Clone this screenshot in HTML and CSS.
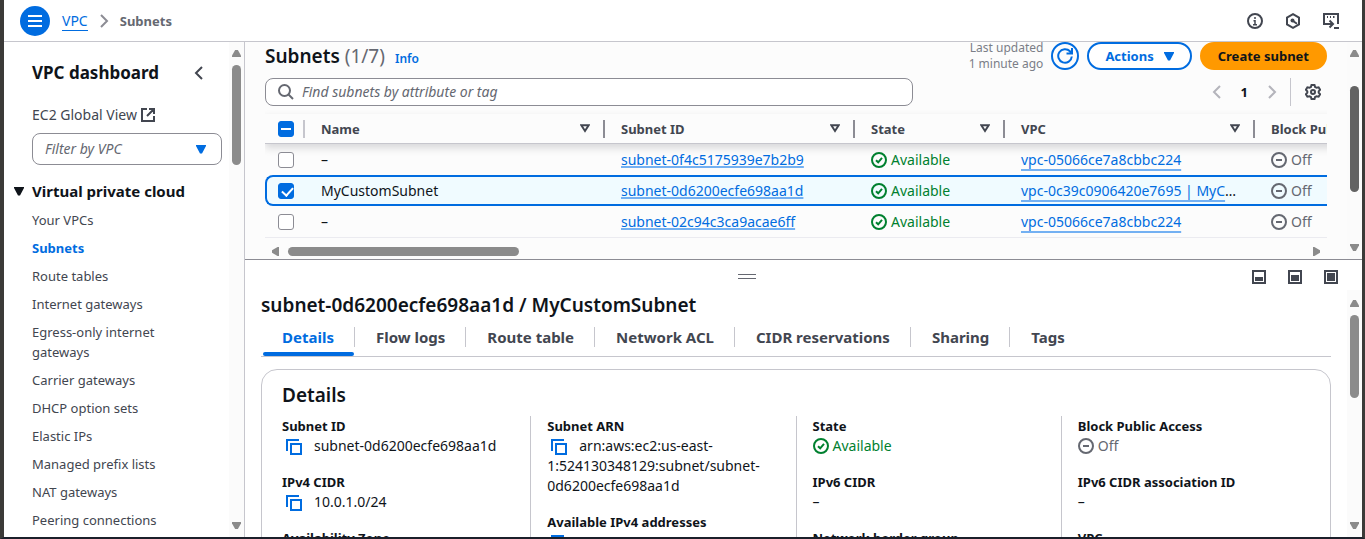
FILE: index.html
```html
<!DOCTYPE html>
<html lang="en">
<head>
<meta charset="utf-8">
<meta name="viewport" content="width=device-width, initial-scale=1">
<title>Subnets | VPC Console</title>
<link rel="stylesheet" href="styles.css">
</head>
<body>
<svg class="sprite" aria-hidden="true">
  <symbol id="ok" viewBox="0 0 16 16"><circle cx="8" cy="8" r="7"/><path d="M5 8.2 7.2 10.3 11 5.8"/></symbol>
  <symbol id="off" viewBox="0 0 16 16"><circle cx="8" cy="8" r="7"/><path d="M5 8h6"/></symbol>
  <symbol id="copy" viewBox="0 0 16 16"><path d="M1 12V1h12"/><path d="M5 5h10v10H5z"/></symbol>
  <symbol id="sort" viewBox="0 0 10 9"><path d="M1.3 1.2h7.4L5 7z"/></symbol>
  <symbol id="caret" viewBox="0 0 10 9"><path d="M0 0h10v1L6 8.500H4L0 1z"/></symbol>
  <symbol id="left" viewBox="0 0 10 14"><path d="M8 1 2 7l6 6"/></symbol>
  <symbol id="right" viewBox="0 0 10 14"><path d="m2 1 6 6-6 6"/></symbol>
</svg>
<div class="app">
  <header class="topbar">
    <button class="menu" aria-label="Open navigation"><svg viewBox="0 0 14 12"><path d="M0 1h14M0 6h14M0 11h14"/></svg></button>
    <nav class="crumbs" aria-label="Breadcrumb">
      <a href="#vpc">VPC</a>
      <svg class="chev"><use href="#right"/></svg>
      <span>Subnets</span>
    </nav>
    <div class="tools">
      <button aria-label="Info"><svg viewBox="0 0 16 16"><circle cx="8" cy="8" r="7"/><path stroke-width="1.500" d="M8 4v2M8 7v5M6.500 7.700H8M6 11.700h4"/></svg></button>
      <button aria-label="Diagnose"><svg viewBox="0 0 16 16"><path d="M8 1.200 14 4.500v7L8 14.800 2 11.500v-7z"/><circle class="solid" cx="7.500" cy="7.500" r="2"/><path d="m8 8 4 2.800"/></svg></button>
      <button aria-label="CloudShell"><svg viewBox="0 0 16 16"><path d="M4 11H1V1h14v10M4 4h1M7 4h1M10 4h1.500M4 11h5M6.500 7.500 10 11l-3.500 3.500M11 15h5"/></svg></button>
    </div>
  </header>

  <div class="body">
    <aside class="side">
      <div class="side-main">
        <div class="side-head">
          <h2>VPC dashboard</h2>
          <button aria-label="Close navigation"><svg class="chev"><use href="#left"/></svg></button>
        </div>
        <a class="ext" href="#ec2">EC2 Global View <svg viewBox="0 0 14 14"><path d="M6 1H1v12h12V8M8 1h5v5M13 1 6 8"/></svg></a>
        <button class="filter"><span>Filter by VPC</span><svg class="caret"><use href="#caret"/></svg></button>
        <h3><svg class="caret"><use href="#caret"/></svg>Virtual private cloud</h3>
        <ul>
          <li><a href="#v">Your VPCs</a></li>
          <li><a class="on" href="#s">Subnets</a></li>
          <li><a href="#r">Route tables</a></li>
          <li><a href="#i">Internet gateways</a></li>
          <li><a href="#e">Egress-only internet gateways</a></li>
          <li><a href="#c">Carrier gateways</a></li>
          <li><a href="#d">DHCP option sets</a></li>
          <li><a href="#el">Elastic IPs</a></li>
          <li><a href="#m">Managed prefix lists</a></li>
          <li><a href="#n">NAT gateways</a></li>
          <li><a href="#p">Peering connections</a></li>
        </ul>
      </div>
      <div class="vbar"><i class="up"></i><b class="thumb"></b><i class="down"></i></div>
    </aside>

    <main>
      <section class="list">
        <div class="list-main">
          <div class="list-head">
            <div class="heading">
              <h1>Subnets <span>(1/7)</span></h1>
              <a class="info" href="#info">Info</a>
            </div>
            <p class="updated">Last updated<br>1 minute ago</p>
            <button class="round" aria-label="Refresh"><svg viewBox="0 0 16 16"><path d="M14.800 8.500A6.800 6.800 0 1 1 13 3.300L14.500 5M15 0v5.500H9.500"/></svg></button>
            <button class="btn">Actions <svg class="caret"><use href="#caret"/></svg></button>
            <button class="btn primary">Create subnet</button>
          </div>
          <div class="list-tools">
            <label class="search">
              <svg viewBox="0 0 16 16"><circle cx="6.500" cy="6.500" r="5.500"/><path d="m10.500 10.500 4.500 4.500"/></svg>
              <input type="text" aria-label="Find subnets" placeholder="Find subnets by attribute or tag">
            </label>
            <div class="pager">
              <button aria-label="Previous page"><svg class="chev"><use href="#left"/></svg></button>
              <b>1</b>
              <button aria-label="Next page"><svg class="chev"><use href="#right"/></svg></button>
              <button class="gear" aria-label="Preferences"><svg viewBox="0 0 16 16"><path d="M6.500 1h3l.6 2 1.500.8 2-.5 1.500 2.500L13.700 7.300v1.400l1.400 1.500-1.500 2.500-2-.5-1.500.8-.6 2h-3l-.6-2-1.500-.8-2 .5L.9 10.200l1.400-1.500V7.300L.9 5.800l1.500-2.500 2 .5L5.900 3z"/><circle cx="8" cy="8" r="2"/></svg></button>
            </div>
          </div>
          <div class="table-wrap">
            <table>
              <colgroup><col class="c-check"><col class="c-name"><col class="c-id"><col class="c-state"><col class="c-id"><col class="c-id"></colgroup>
              <thead>
                <tr>
                  <th><input type="checkbox" class="some" aria-label="Select all"></th>
                  <th><div>Name <svg class="sort"><use href="#sort"/></svg></div></th>
                  <th><div>Subnet ID <svg class="sort"><use href="#sort"/></svg></div></th>
                  <th><div>State <svg class="sort"><use href="#sort"/></svg></div></th>
                  <th><div>VPC <svg class="sort"><use href="#sort"/></svg></div></th>
                  <th><div>Block Public Access</div></th>
                </tr>
              </thead>
              <tbody>
                <tr>
                  <td><input type="checkbox" aria-label="Select subnet-0f4c5175939e7b2b9"></td>
                  <td>–</td>
                  <td><a href="#a">subnet-0f4c5175939e7b2b9</a></td>
                  <td><span class="status ok"><svg><use href="#ok"/></svg>Available</span></td>
                  <td class="vpc"><a href="#b">vpc-05066ce7a8cbbc224</a></td>
                  <td><span class="status"><svg><use href="#off"/></svg>Off</span></td>
                </tr>
                <tr class="sel">
                  <td><input type="checkbox" checked aria-label="Select MyCustomSubnet"></td>
                  <td>MyCustomSubnet</td>
                  <td><a href="#a">subnet-0d6200ecfe698aa1d</a></td>
                  <td><span class="status ok"><svg><use href="#ok"/></svg>Available</span></td>
                  <td class="vpc"><a href="#b">vpc-0c39c0906420e7695 | MyC</a>…</td>
                  <td><span class="status"><svg><use href="#off"/></svg>Off</span></td>
                </tr>
                <tr>
                  <td><input type="checkbox" aria-label="Select subnet-02c94c3ca9acae6ff"></td>
                  <td>–</td>
                  <td><a href="#a">subnet-02c94c3ca9acae6ff</a></td>
                  <td><span class="status ok"><svg><use href="#ok"/></svg>Available</span></td>
                  <td class="vpc"><a href="#b">vpc-05066ce7a8cbbc224</a></td>
                  <td><span class="status"><svg><use href="#off"/></svg>Off</span></td>
                </tr>
              </tbody>
            </table>
          </div>
          <div class="hbar"><i class="prev"></i><b class="thumb"></b><i class="next"></i></div>
        </div>
        <div class="vbar dark"><i class="up"></i><b class="thumb"></b><i class="down"></i></div>
      </section>

      <section class="split">
        <div class="split-bar">
          <button class="grip" aria-label="Resize panel"></button>
          <div class="sizes">
            <button aria-label="Small panel"><svg viewBox="0 0 14 14"><path d="M1 1h12v12H1z"/><path class="solid" d="M3 7h8v4H3z"/></svg></button>
            <button aria-label="Medium panel"><svg viewBox="0 0 14 14"><path d="M1 1h12v12H1z"/><path class="solid" d="M3 5h8v6H3z"/></svg></button>
            <button aria-label="Full panel"><svg viewBox="0 0 14 14"><path d="M1 1h12v12H1z"/><path class="solid" d="M3 3h8v8H3z"/></svg></button>
          </div>
        </div>
        <div class="split-body">
          <div class="split-main">
            <h2>subnet-0d6200ecfe698aa1d / MyCustomSubnet</h2>
            <div class="tabs" role="tablist">
              <button role="tab" aria-selected="true">Details</button>
              <button role="tab">Flow logs</button>
              <button role="tab">Route table</button>
              <button role="tab">Network ACL</button>
              <button role="tab">CIDR reservations</button>
              <button role="tab">Sharing</button>
              <button role="tab">Tags</button>
            </div>
            <div class="card">
              <h3>Details</h3>
              <div class="cols">
                <dl>
                  <dt>Subnet ID</dt><dd><button class="copy" aria-label="Copy"><svg><use href="#copy"/></svg></button>subnet-0d6200ecfe698aa1d</dd>
                  <dt>IPv4 CIDR</dt><dd><button class="copy" aria-label="Copy"><svg><use href="#copy"/></svg></button>10.0.1.0/24</dd>
                  <dt>Availability Zone</dt>
                </dl>
                <dl>
                  <dt>Subnet ARN</dt><dd><button class="copy" aria-label="Copy"><svg><use href="#copy"/></svg></button>arn:aws:ec2:us-east-<br>1:524130348129:subnet/subnet-<br>0d6200ecfe698aa1d</dd>
                  <dt>Available IPv4 addresses</dt><dd><button class="copy" aria-label="Copy"><svg><use href="#copy"/></svg></button></dd>
                </dl>
                <dl>
                  <dt>State</dt><dd><span class="status ok"><svg><use href="#ok"/></svg>Available</span></dd>
                  <dt>IPv6 CIDR</dt><dd>–</dd>
                  <dt>Network border group</dt>
                </dl>
                <dl>
                  <dt>Block Public Access</dt><dd><span class="status"><svg><use href="#off"/></svg>Off</span></dd>
                  <dt>IPv6 CIDR association ID</dt><dd>–</dd>
                  <dt>VPC</dt>
                </dl>
              </div>
            </div>
          </div>
          <div class="vbar"><i class="up"></i><b class="thumb"></b><i class="down"></i></div>
        </div>
      </section>
    </main>
  </div>
</div>
</body>
</html>
```

FILE: styles.css
```css
:root {
  --ink: #0f141a;
  --text: #424650;
  --muted: #656871;
  --blue: #006ce0;
  --line: #c6c6cd;
  --edge: #8c8c94;
  --green: #00802f;
}
* { box-sizing: border-box; }
body {
  margin: 0;
  font: 14px/20px "Noto Sans", "Open Sans", sans-serif;
  color: var(--ink);
}
h1, h2, h3, p, ul, dl, dd { margin: 0; padding: 0; }
ul { list-style: none; }
button { font: inherit; color: inherit; background: none; border: 0; padding: 0; }
a { color: var(--blue); text-decoration: none; }
svg { display: block; flex: none; width: 16px; height: 16px; fill: none; stroke: currentColor; stroke-width: 2; }
.sprite { display: none; }
.solid { fill: currentColor; stroke: none; }
.chev { width: 10px; height: 14px; }
.caret { width: 10px; height: 9px; fill: currentColor; stroke: none; }
.sort { width: 10px; height: 9px; }

.app {
  display: flex;
  flex-direction: column;
  height: 100vh;
  overflow: hidden;
  border: solid #3b3a38;
  border-width: 0 3px 2px 4px;
  border-bottom-color: #1b1f2a;
}
.body { flex: 1; min-height: 0; display: flex; }

/* Top bar */
.topbar {
  flex: none;
  display: flex;
  align-items: center;
  height: 42px;
  padding: 0 23px 0 16px;
  border-bottom: 1px solid var(--line);
}
.menu {
  display: grid;
  place-items: center;
  width: 30px;
  height: 30px;
  border-radius: 50%;
  background: var(--blue);
  color: #fff;
}
.menu svg { width: 14px; height: 12px; }
.crumbs { display: flex; align-items: center; gap: 11px; margin-left: 12px; }
.crumbs a { border-bottom: 1px solid var(--blue); line-height: 19px; }
.crumbs .chev { color: var(--edge); }
.crumbs span { color: var(--muted); font-weight: 700; font-size: 13px; }
.tools { display: flex; gap: 22px; margin-left: auto; color: var(--text); }

/* Side navigation */
.side { flex: none; display: flex; width: 241px; border-right: 1px solid var(--line); }
.side-main { flex: 1; padding: 20px 8px 0 28px; overflow: hidden; color: var(--text); }
.side-head { display: flex; align-items: center; justify-content: space-between; padding-right: 17px; }
.side-head h2 { font-size: 17px; line-height: 22px; font-weight: 700; color: var(--ink); }
.ext { display: flex; align-items: center; gap: 4px; margin-top: 21px; color: var(--text); }
.ext svg { width: 14px; height: 14px; }
.filter {
  display: flex;
  align-items: center;
  justify-content: space-between;
  width: 190px;
  height: 32px;
  margin-top: 8px;
  padding: 0 15px 0 12px;
  border: 1px solid var(--edge);
  border-radius: 8px;
  font-style: italic;
  color: var(--muted);
}
.filter .caret { color: var(--blue); }
.side h3 { display: flex; align-items: center; gap: 8px; margin: 16px 0 9px -18px; font-size: 15px; font-weight: 700; color: var(--ink); }
.side li { margin-bottom: 8px; font-size: 13px; padding-right: 40px; }
.side li a { color: var(--text); }
.side li a.on { color: var(--blue); font-weight: 700; }

/* Scroll bars */
.vbar { flex: none; display: flex; flex-direction: column; align-items: center; width: 15px; padding: 8px 0; background: #fbfbfb; }
.vbar i, .hbar i { width: 9px; height: 7px; background: #8b8b8b; }
.vbar .up { clip-path: polygon(35% 0, 65% 0, 100% 80%, 100% 100%, 0 100%, 0 80%); }
.vbar .down { margin-top: auto; clip-path: polygon(0 0, 100% 0, 100% 20%, 65% 100%, 35% 100%, 0 20%); }
.thumb { background: #8b8b8b; border-radius: 5px; }
.vbar .thumb { width: 9px; height: 100px; margin-top: 8px; }
.vbar.dark .thumb { height: 106px; margin-top: 29px; background: #636363; }
.split .vbar { padding: 10px 0 8px; }
.split .vbar .thumb { height: 83px; }
.hbar { display: flex; align-items: center; height: 9px; margin-top: 9px; padding: 0 7px; }
.hbar i { width: 7px; height: 9px; }
.hbar .prev { clip-path: polygon(100% 0, 100% 100%, 80% 100%, 0 65%, 0 35%, 80% 0); }
.hbar .next { margin-left: auto; clip-path: polygon(0 0, 0 100%, 20% 100%, 100% 65%, 100% 35%, 20% 0); }
.hbar .thumb { width: 22%; height: 9px; margin-left: 9px; }

/* Subnet list */
main { flex: 1; min-width: 0; display: flex; flex-direction: column; }
.list { flex: none; display: flex; background: #fcfcfc; border-bottom: 1px solid var(--edge); }
.list-main { flex: 1; min-width: 0; padding: 0 20px 3px; }
.list-head { display: flex; align-items: center; height: 28px; }
.heading { display: flex; align-items: baseline; gap: 10px; }
h1 { font-size: 19px; line-height: 28px; font-weight: 600; }
h1 span { font-weight: 400; color: var(--muted); }
.info { font-size: 12px; font-weight: 600; }
.updated { margin: 0 8px 0 auto; color: #7b7e87; font-size: 12px; line-height: 16px; text-align: right; }
.round { display: grid; place-items: center; width: 28px; height: 28px; border: 2px solid var(--blue); border-radius: 50%; color: var(--blue); }
.btn {
  display: flex;
  align-items: center;
  gap: 10px;
  height: 28px;
  margin-left: 8px;
  padding: 0 16px;
  border: 2px solid var(--blue);
  border-radius: 14px;
  background: #fff;
  color: var(--blue);
  font-size: 13px;
  font-weight: 700;
}
.btn.primary { background: #f90; border-color: #f90; color: var(--ink); }
.list-tools { display: flex; align-items: center; justify-content: space-between; margin-top: 8px; }
.search {
  display: flex;
  align-items: center;
  gap: 8px;
  width: 61%;
  height: 28px;
  padding: 0 12px;
  border: 1px solid var(--edge);
  border-radius: 8px;
  background: #fff;
  color: var(--muted);
}
.search input { flex: 1; border: 0; padding: 0; outline: 0; background: none; font: italic 14px/20px "Noto Sans", sans-serif; }
.search input::placeholder { color: var(--muted); }
.pager { display: flex; align-items: center; gap: 19px; padding-right: 6px; color: #b4b4bb; }
.pager b { font-size: 13px; font-weight: 700; color: var(--ink); }
.gear { margin-left: -6px; padding: 6px 0 6px 14px; border-left: 1px solid var(--line); color: var(--text); }
.table-wrap { margin: 0 -20px; padding: 8px 20px 0; overflow: hidden; clip-path: inset(0 20px); }
table { width: 1240px; table-layout: fixed; border-collapse: separate; border-spacing: 0; }
.c-check { width: 40px; }
.c-name { width: 300px; }
.c-id { width: 250px; }
.c-state { width: 150px; }
thead { box-shadow: 0 4px 8px rgba(0, 7, 22, .15); }
th { height: 30px; padding: 0; text-align: left; font-size: 13px; font-weight: 700; color: var(--text); border-bottom: 1px solid var(--line); }
th div { display: flex; align-items: center; justify-content: space-between; height: 18px; padding: 0 13px 0 16px; border-right: 2px solid var(--edge); }
th:last-child div { border: 0; }
th:first-child { background: linear-gradient(var(--line), var(--line)) right center / 2px 18px no-repeat; }
td { height: 31px; padding: 0 16px; white-space: nowrap; line-height: 20px; border: 0 solid #ebebf0; }
tbody tr:last-child td { height: 32px; border-bottom-width: 1px; }
th:first-child, td:first-child { padding: 0 0 0 13px; }
.sel td { background: #f0fbff; border: solid var(--blue); border-width: 2px 0; }
.sel td:first-child { border-left-width: 2px; border-radius: 8px 0 0 8px; padding-left: 11px; }
td a { text-decoration: underline #73b0f2; text-decoration-thickness: 2px; text-underline-offset: 1px; text-decoration-skip-ink: none; }
td.vpc a { text-underline-offset: 4px; }
.status { display: flex; align-items: center; gap: 4px; color: var(--muted); }
.status.ok { color: var(--green); }
input[type="checkbox"] {
  appearance: none;
  display: block;
  width: 16px;
  height: 16px;
  margin: 0;
  border: 1px solid var(--edge);
  border-radius: 3px;
  background: #fff;
}
input[type="checkbox"]:checked, input[type="checkbox"].some { position: relative; border-color: var(--blue); background: var(--blue); }
input[type="checkbox"]:checked::after {
  content: "";
  position: absolute;
  left: 5px;
  top: 1px;
  width: 5px;
  height: 9px;
  border: solid #fff;
  border-width: 0 2px 2px 0;
  transform: rotate(42deg);
}
input.some::after { content: ""; position: absolute; left: 2px; right: 2px; top: 6px; height: 2px; background: #fff; }

/* Split panel */
.split { flex: 1; min-height: 0; display: flex; flex-direction: column; }
.split-bar { flex: none; display: flex; align-items: center; height: 30px; padding: 3px 24px 0 0; }
.grip { width: 18px; height: 5px; margin: 0 auto; border: solid var(--muted); border-width: 1px 0; }
.sizes { display: flex; gap: 22px; margin-left: 4px; color: var(--text); }
.sizes svg { width: 14px; height: 14px; }
.split-body { flex: 1; min-height: 0; display: flex; }
.split-main { flex: 1; min-width: 0; padding: 3px 16px 0; overflow: hidden; }
.split-main > h2 { font-size: 19px; line-height: 24px; font-weight: 600; }
.tabs { display: flex; align-items: flex-start; height: 40px; padding-top: 10px; border-bottom: 1px solid var(--line); color: var(--text); font-size: 15px; font-weight: 700; }
.tabs button { height: 20px; padding: 0 20px 0 21px; border-right: 1px solid var(--line); }
.tabs button:last-child { border: 0; }
.tabs [aria-selected="true"] { position: relative; color: var(--blue); }
.tabs [aria-selected="true"]::after { content: ""; position: absolute; left: 2px; right: 0; bottom: -9px; height: 4px; border-radius: 2px; background: var(--blue); }
.card { margin-top: 12px; padding: 13px 4px 0 20px; border: 1px solid var(--line); border-radius: 16px; }
.card h3 { font-size: 19px; line-height: 24px; font-weight: 600; }
.cols { display: grid; grid-template-columns: repeat(4, 1fr); margin: 9px 0 0 -17px; }
dl { height: 240px; border-left: 1px solid var(--line); padding-left: 16px; }
dl:first-child { border-color: transparent; }
dt { font-size: 13px; font-weight: 700; }
dd { min-height: 20px; margin-bottom: 16px; }
.copy { display: inline-block; width: 16px; height: 16px; margin: 0 12px 0 4px; vertical-align: middle; color: var(--blue); }
```
